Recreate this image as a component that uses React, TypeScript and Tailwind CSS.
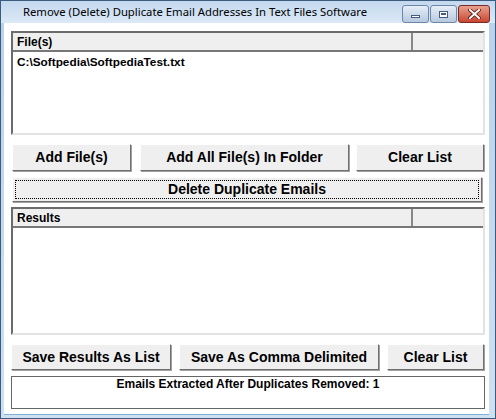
import React from 'react';

const font = { fontFamily: '"Liberation Sans", Arial, sans-serif' };

function Btn({ label, className = '' }: { label: string; className?: string }) {
  return (
    <div
      className={`flex items-center justify-center bg-[#efefef] border border-t-white border-l-white border-r-[#707070] border-b-[#707070] shadow-[1px_1px_0_#a0a0a0] text-[14px] font-bold text-black ${className}`}
    >
      {label}
    </div>
  );
}

function ListBox({ title, children, className = '' }: { title: string; children?: React.ReactNode; className?: string }) {
  return (
    <div className={`flex flex-col bg-white border-2 border-t-[#6b6b6b] border-l-[#6b6b6b] border-r-[#e3e3e3] border-b-[#e3e3e3] ${className}`}>
      <div className="flex h-[19px] bg-[#efefef] border-b-2 border-[#777]">
        <div className="flex-1 flex items-center pl-[4px] text-[12px] font-bold border-r-2 border-[#888]">{title}</div>
        <div className="w-[70px]" />
      </div>
      <div className="flex-1 px-[4px] pt-[2px] text-[12px] font-bold">{children}</div>
    </div>
  );
}

export default function App() {
  return (
    <div className="w-[496px] h-[419px] flex flex-col bg-gradient-to-b from-[#b9d1ea] to-[#cfe0f1] border border-[#3c5b80]" style={font}>
      {/* title bar */}
      <div className="relative h-[22px] flex items-center justify-center bg-gradient-to-b from-[#c3d8ee] to-[#dce9f6]">
        <span className="text-[11.3px] text-black pr-[106px]" style={{ fontFamily: '"Noto Sans", "Open Sans", sans-serif' }}>
          Remove (Delete) Duplicate Email Addresses In Text Files Software
        </span>
        <div className="absolute right-[5px] top-[4px] flex gap-[1px]">
          <div className="w-[27px] h-[18px] rounded-[3px] border border-[#6d87a8] bg-gradient-to-b from-[#e6eef8] to-[#b7c9df] flex items-center justify-center">
            <div className="w-[9px] h-[3px] bg-white border border-[#445d7e] mt-[5px]" />
          </div>
          <div className="w-[27px] h-[18px] rounded-[3px] border border-[#6d87a8] bg-gradient-to-b from-[#e6eef8] to-[#b7c9df] flex items-center justify-center">
            <div className="w-[9px] h-[7px] border border-[#445d7e] bg-white flex items-center justify-center">
              <div className="w-[5px] h-[2px] bg-[#445d7e]" />
            </div>
          </div>
          <div className="w-[32px] h-[18px] rounded-[3px] border border-[#7a2a20] bg-gradient-to-b from-[#e9a08f] to-[#c7452f] flex items-center justify-center">
            <svg width="13" height="10" viewBox="0 0 13 10">
              <path d="M2 1 L11 9 M11 1 L2 9" stroke="#5a1a10" strokeWidth="3.6" strokeLinecap="square" />
              <path d="M2 1 L11 9 M11 1 L2 9" stroke="#fff" strokeWidth="2" strokeLinecap="square" />
            </svg>
          </div>
        </div>
      </div>

      {/* client area */}
      <div className="flex-1 ml-[3px] mr-[6px] mb-[3px] bg-white flex flex-col pl-[7px] pr-[3px] pt-[8px] text-black border-b border-[#7fb0d8]">
        <ListBox title="File(s)" className="w-[474px] h-[104px]">
          <div className="text-[11.8px]">C:\Softpedia\SoftpediaTest.txt</div>
        </ListBox>

        <div className="flex mt-[9px] h-[27px]">
          <Btn label="Add File(s)" className="w-[119px] ml-[1px]" />
          <Btn label="Add All File(s) In Folder" className="w-[209px] ml-[9px]" />
          <Btn label="Clear List" className="w-[128px] ml-[7px]" />
        </div>

        <div className="mt-[6px] ml-[1px] w-[470px] h-[25px] bg-[#efefef] border border-t-white border-l-white border-r-[#707070] border-b-[#707070] shadow-[1px_1px_0_#a0a0a0] p-[2px]">
          <div className="w-full h-full border border-dotted border-black flex items-center justify-center text-[14px] font-bold">
            Delete Duplicate Emails
          </div>
        </div>

        <ListBox title="Results" className="w-[474px] h-[128px] mt-[5px]" />

        <div className="flex mt-[9px] h-[26px]">
          <Btn label="Save Results As List" className="w-[160px]" />
          <Btn label="Save As Comma Delimited" className="w-[200px] ml-[8px]" />
          <Btn label="Clear List" className="w-[97px] ml-[8px]" />
        </div>

        <div className="mt-[6px] w-[474px] h-[33px] border border-[#666] flex justify-center text-[12px] font-bold leading-[14px]">
          Emails Extracted After Duplicates Removed: 1
        </div>
      </div>
    </div>
  );
}
